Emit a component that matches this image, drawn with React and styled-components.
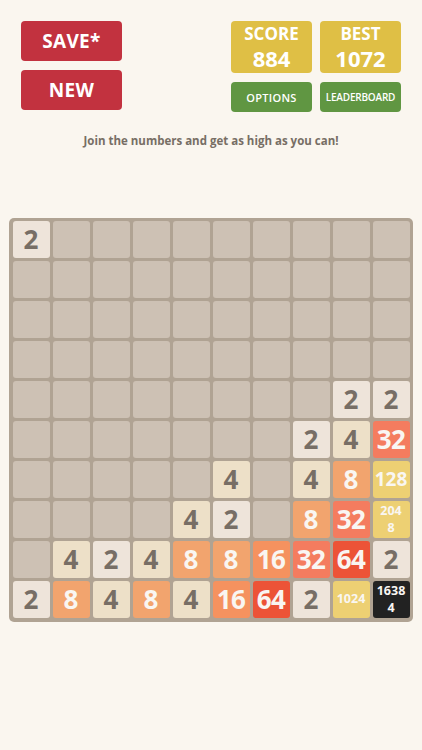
import React from 'react';
import styled, { createGlobalStyle } from 'styled-components';

const GlobalStyle = createGlobalStyle`
  html, body {
    margin: 0;
    padding: 0;
    background: #faf6ef;
    font-family: "Open Sans", "DejaVu Sans", sans-serif;
  }
`;

const Page = styled.div`
  width: 422px;
  height: 750px;
  background: #faf6ef;
  box-sizing: border-box;
  padding: 21px 9px 0;
`;

const Header = styled.div`
  display: flex;
  justify-content: space-between;
  padding: 0 12px;
`;

const LeftCol = styled.div`
  display: flex;
  flex-direction: column;
  gap: 9px;
`;

const RedButton = styled.div`
  width: 101px;
  height: 40px;
  border-radius: 4px;
  background: #c2323f;
  color: #fff;
  font-size: 19px;
  font-weight: 700;
  display: flex;
  align-items: center;
  justify-content: center;
  letter-spacing: 0.3px;
`;

const RightGrid = styled.div`
  display: grid;
  grid-template-columns: 81px 81px;
  grid-template-rows: 52px 30px;
  column-gap: 8px;
  row-gap: 9px;
`;

const ScoreBox = styled.div`
  border-radius: 4px;
  background: #dfbf45;
  color: #fff;
  font-weight: 700;
  display: flex;
  flex-direction: column;
  align-items: center;
  justify-content: center;
  line-height: 1;
`;

const ScoreLabel = styled.div`
  font-size: 17px;
  margin-bottom: 5px;
`;

const ScoreValue = styled.div`
  font-size: 22px;
`;

const GreenButton = styled.div`
  border-radius: 4px;
  background: #609642;
  color: #fff;
  font-size: ${p => p.$small ? '10px' : '11px'};
  font-weight: 600;
  display: flex;
  align-items: center;
  justify-content: center;
  letter-spacing: ${p => p.$small ? '-0.2px' : '0.3px'};
  white-space: nowrap;
`;

const Tagline = styled.div`
  text-align: center;
  margin-top: 21px;
  font-size: 11.5px;
  font-weight: 700;
  color: #776e65;
`;

const Board = styled.div`
  margin-top: 70px;
  width: 404px;
  height: 404px;
  box-sizing: border-box;
  background: #b0a393;
  border-radius: 5px;
  padding: 3px 3.5px 4px;
  display: grid;
  grid-template-columns: repeat(10, 1fr);
  grid-template-rows: repeat(10, 1fr);
  gap: 3px;
`;

const tileStyles = {
  0: { bg: '#cdc1b4', fg: 'transparent' },
  2: { bg: '#eee4da', fg: '#776e65' },
  4: { bg: '#ede0c8', fg: '#776e65' },
  8: { bg: '#f2a46e', fg: '#f9f6f2' },
  16: { bg: '#f5925f', fg: '#f9f6f2' },
  32: { bg: '#f47c5f', fg: '#f9f6f2' },
  64: { bg: '#ec5337', fg: '#f9f6f2' },
  128: { bg: '#edd073', fg: '#f9f6f2' },
  1024: { bg: '#edd073', fg: '#f9f6f2' },
  2048: { bg: '#edd073', fg: '#f9f6f2' },
  16384: { bg: '#222222', fg: '#f9f6f2' },
};

const fontFor = v => {
  if (v >= 1000) return '12.5px';
  if (v >= 100) return '19px';
  return '26px';
};

const Tile = styled.div`
  border-radius: 3px;
  background: ${p => tileStyles[p.$v].bg};
  color: ${p => tileStyles[p.$v].fg};
  font-size: ${p => fontFor(p.$v)};
  font-weight: 700;
  display: flex;
  align-items: center;
  justify-content: center;
  text-align: center;
  line-height: 1.3;
  overflow: hidden;
  white-space: nowrap;
  letter-spacing: ${p => p.$v >= 10 && p.$v < 100 ? '-0.5px' : '0'};
`;

const rows = [
  [2, 0, 0, 0, 0, 0, 0, 0, 0, 0],
  [0, 0, 0, 0, 0, 0, 0, 0, 0, 0],
  [0, 0, 0, 0, 0, 0, 0, 0, 0, 0],
  [0, 0, 0, 0, 0, 0, 0, 0, 0, 0],
  [0, 0, 0, 0, 0, 0, 0, 0, 2, 2],
  [0, 0, 0, 0, 0, 0, 0, 2, 4, 32],
  [0, 0, 0, 0, 0, 4, 0, 4, 8, 128],
  [0, 0, 0, 0, 4, 2, 0, 8, 32, 2048],
  [0, 4, 2, 4, 8, 8, 16, 32, 64, 2],
  [2, 8, 4, 8, 4, 16, 64, 2, 1024, 16384],
];

const labelFor = v => {
  if (v === 2048) return <>204<br />8</>;
  if (v === 16384) return <>1638<br />4</>;
  return v || '';
};

export default function App() {
  return (
    <Page>
      <GlobalStyle />
      <Header>
        <LeftCol>
          <RedButton>SAVE*</RedButton>
          <RedButton>NEW</RedButton>
        </LeftCol>
        <RightGrid>
          <ScoreBox>
            <ScoreLabel>SCORE</ScoreLabel>
            <ScoreValue>884</ScoreValue>
          </ScoreBox>
          <ScoreBox>
            <ScoreLabel>BEST</ScoreLabel>
            <ScoreValue>1072</ScoreValue>
          </ScoreBox>
          <GreenButton>OPTIONS</GreenButton>
          <GreenButton $small>LEADERBOARD</GreenButton>
        </RightGrid>
      </Header>
      <Tagline>Join the numbers and get as high as you can!</Tagline>
      <Board>
        {rows.flat().map((v, i) => (
          <Tile key={i} $v={v}>{labelFor(v)}</Tile>
        ))}
      </Board>
    </Page>
  );
}
